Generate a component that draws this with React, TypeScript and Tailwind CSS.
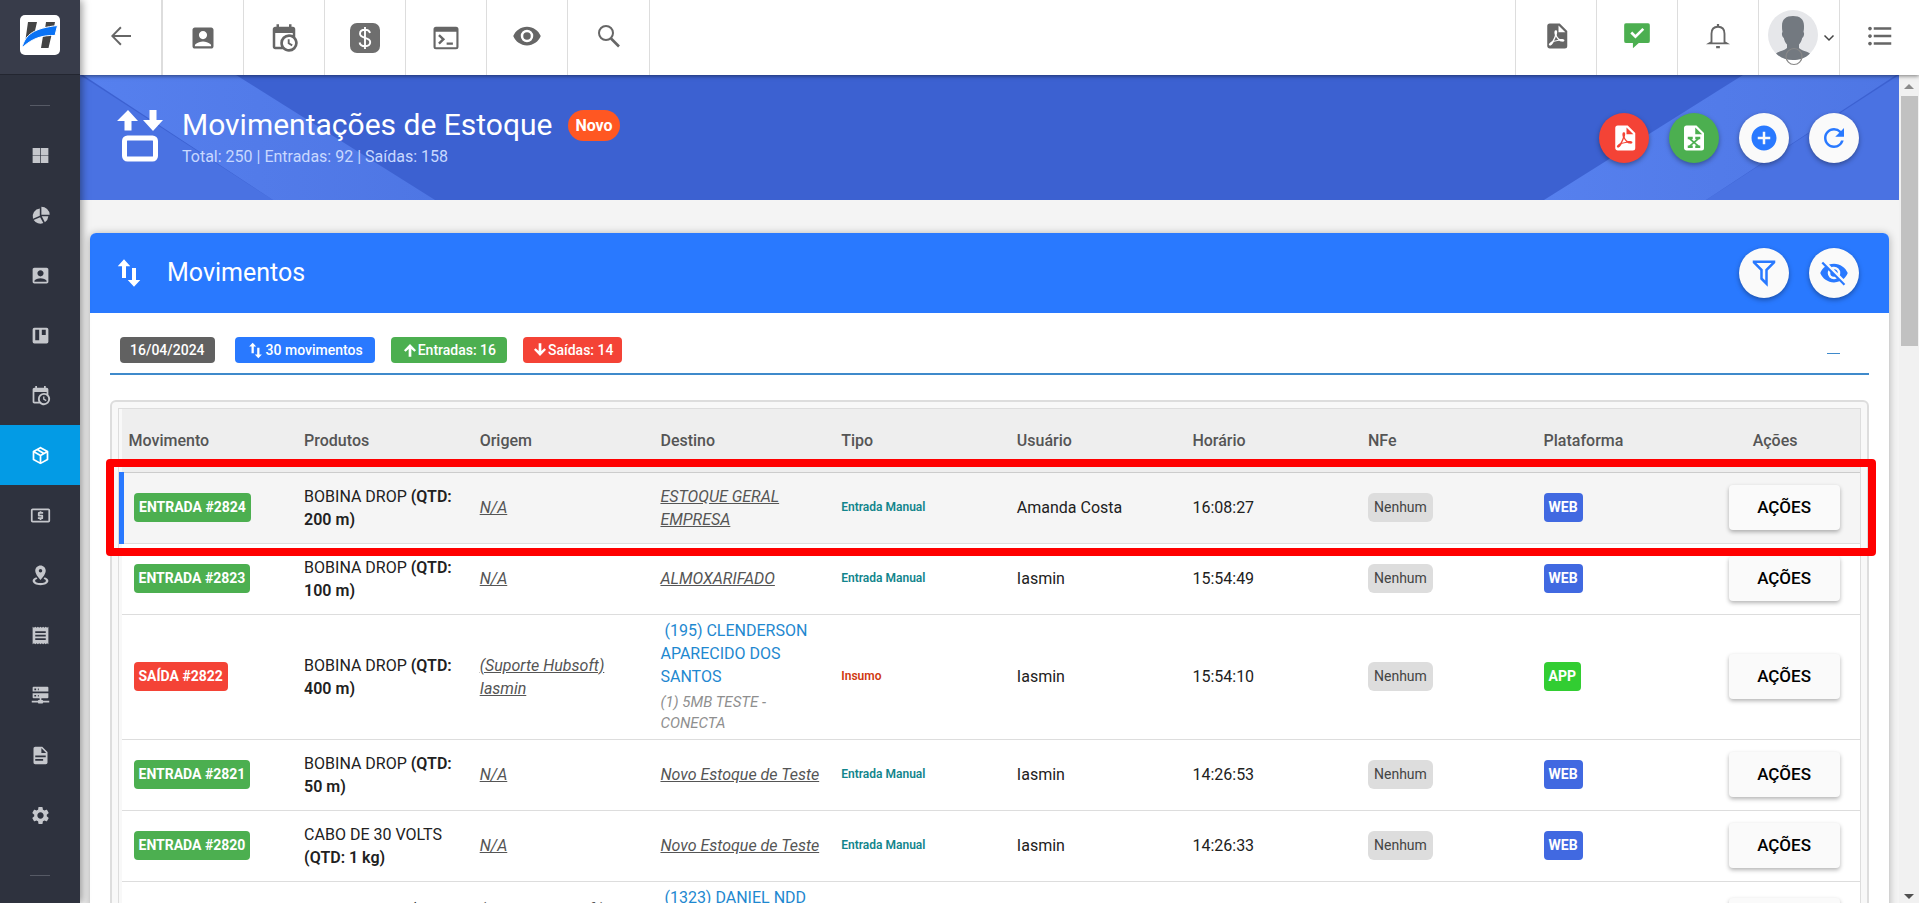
import React from 'react';
import {
    MdAccountBox,
    MdAddCircle,
    MdFormatListBulleted,
    MdRefresh,
    MdSettings,
} from 'react-icons/md';

interface IconProps {
    className?: string;
}

interface Movimento {
    id: number;
    tipo: 'ENTRADA' | 'SAÍDA';
    produto: string;
    qtd: string;
    origem: string;
    destino: string;
    servico?: string;
    motivo: string;
    usuario: string;
    horario: string;
    plataforma: 'WEB' | 'APP';
}

// Cria um ícone 24x24 a partir de um único path
function makeIcon(d: string) {
    return function Icon({ className }: IconProps) {
        return (
            <svg viewBox="0 0 24 24" fill="currentColor" className={className} aria-hidden="true">
                <path d={d} fillRule="evenodd" />
            </svg>
        );
    };
}

const IconWindows = makeIcon('M3,3.5H11.6V11.6H3V3.5M12.4,3.5H21V11.6H12.4V3.5M3,12.4H11.6V20.5H3V12.4M12.4,12.4H21V20.5H12.4V12.4Z');
const IconCalendarClock = makeIcon('M15,13H16.5V15.82L18.94,17.23L18.19,18.53L15,16.69V13M19,8H5V19H9.67C9.24,18.09 9,17.07 9,16A7,7 0 0,1 16,9C17.07,9 18.09,9.24 19,9.67V8M5,21C3.89,21 3,20.1 3,19V5C3,3.89 3.89,3 5,3H6V1H8V3H16V1H18V3H19A2,2 0 0,1 21,5V11.1C22.24,12.36 23,14.09 23,16A7,7 0 0,1 16,23C14.09,23 12.36,22.24 11.1,21H5M16,11.15A4.85,4.85 0 0,0 11.15,16C11.15,18.68 13.32,20.85 16,20.85A4.85,4.85 0 0,0 20.85,16C20.85,13.32 18.68,11.15 16,11.15Z');
const IconEye = makeIcon('M12,9A3,3 0 0,0 9,12A3,3 0 0,0 12,15A3,3 0 0,0 15,12A3,3 0 0,0 12,9M12,17A5,5 0 0,1 7,12A5,5 0 0,1 12,7A5,5 0 0,1 17,12A5,5 0 0,1 12,17M12,4.5C7,4.5 2.73,7.61 1,12C2.73,16.39 7,19.5 12,19.5C17,19.5 21.27,16.39 23,12C21.27,7.61 17,4.5 12,4.5Z');
const IconEyeOff = makeIcon('M11.83,9L15,12.16C15,12.11 15,12.05 15,12A3,3 0 0,0 12,9C11.94,9 11.89,9 11.83,9M7.53,9.8L9.08,11.35C9.03,11.56 9,11.77 9,12A3,3 0 0,0 12,15C12.22,15 12.44,14.97 12.65,14.92L14.2,16.47C13.53,16.8 12.79,17 12,17A5,5 0 0,1 7,12C7,11.21 7.2,10.47 7.53,9.8M2,4.27L4.28,6.55L4.73,7C3.08,8.3 1.78,10 1,12C2.73,16.39 7,19.5 12,19.5C13.55,19.5 15.03,19.2 16.38,18.66L16.81,19.08L19.73,22L21,20.73L3.27,3M12,7A5,5 0 0,1 17,12C17,12.64 16.87,13.26 16.64,13.82L19.57,16.75C21.07,15.5 22.27,13.86 23,12C21.27,7.61 17,4.5 12,4.5C10.6,4.5 9.26,4.75 8,5.2L10.17,7.35C10.74,7.13 11.35,7 12,7Z');
const IconPackage = makeIcon('M21,16.5C21,16.88 20.79,17.21 20.47,17.38L12.57,21.82C12.41,21.94 12.21,22 12,22C11.79,22 11.59,21.94 11.43,21.82L3.53,17.38C3.21,17.21 3,16.88 3,16.5V7.5C3,7.12 3.21,6.79 3.53,6.62L11.43,2.18C11.59,2.06 11.79,2 12,2C12.21,2 12.41,2.06 12.57,2.18L20.47,6.62C20.79,6.79 21,7.12 21,7.5V16.5M12,4.15L10.11,5.22L16,8.61L17.96,7.5L12,4.15M6.04,7.5L12,10.85L13.96,9.75L8.08,6.35L6.04,7.5M5,15.91L11,19.29V12.58L5,9.21V15.91M19,15.91V9.21L13,12.58V19.29L19,15.91Z');
const IconFilePdf = makeIcon('M14,9H19.5L14,3.5V9M7,2H15L21,8V20A2,2 0 0,1 19,22H7C5.89,22 5,21.1 5,20V4A2,2 0 0,1 7,2M11.93,12.44C12.34,13.34 12.86,14.08 13.46,14.59L13.87,14.91C13,15.07 11.8,15.35 10.53,15.84L10.42,15.88L10.92,14.84C11.37,13.97 11.7,13.18 11.93,12.44M18.41,16.25C18.59,16.07 18.68,15.84 18.69,15.59C18.72,15.39 18.67,15.2 18.57,15.04C18.28,14.57 17.53,14.35 16.29,14.35L15,14.42L14.13,13.84C13.5,13.32 12.93,12.41 12.53,11.28L12.57,11.14C12.9,9.81 13.21,8.2 12.55,7.54C12.39,7.38 12.17,7.3 11.94,7.3H11.7C11.33,7.3 11,7.69 10.91,8.07C10.54,9.4 10.76,10.13 11.13,11.34C10.88,12.23 10.56,13.25 10.05,14.28L9.09,16.08L8.2,16.57C7,17.32 6.43,18.16 6.32,18.69C6.28,18.88 6.3,19.05 6.37,19.23L6.4,19.28L6.88,19.59L7.32,19.7C8.13,19.7 9.05,18.75 10.29,16.63L10.47,16.56C11.5,16.23 12.78,16 14.5,15.81C15.53,16.32 16.74,16.55 17.5,16.55C17.94,16.55 18.24,16.44 18.41,16.25Z');
const IconFileExcel = makeIcon('M13,9H18.5L13,3.5V9M6,2H14L20,8V20A2,2 0 0,1 18,22H6C4.89,22 4,21.1 4,20V4C4,2.89 4.89,2 6,2M17,11H13V13H14L12,14.67L10,13H11V11H7V13H8L11,15.5L8,18H7V20H11V18H10L12,16.33L14,18H13V20H17V18H16L13,15.5L16,13H17V11Z');
const IconFilter = makeIcon('M3,2H21V4H20.92L15,9.92V22.91L9,16.91V9.91L3.09,4H3V2M11,16.08L13,18.08V9H13.09L18.09,4H5.92L10.92,9H11V16.08Z');
const IconArrowLeft = makeIcon('M11.2,2.6L12.6,4L5.6,11H22V13H5.6L12.6,20L11.2,21.4L2,12L11.2,2.6Z');
const IconConsole = makeIcon('M4,3H20A2,2 0 0,1 22,5V19A2,2 0 0,1 20,21H4A2,2 0 0,1 2,19V5A2,2 0 0,1 4,3M3.7,7V19.3H20.3V7H3.7M7,9L11.3,13L7,17.2L5.7,15.8L8.5,13L5.7,10.4L7,9M12.5,15.5H17.5V17.3H12.5V15.5Z');
const IconTrello = makeIcon('M5,3H19A2,2 0 0,1 21,5V19A2,2 0 0,1 19,21H5A2,2 0 0,1 3,19V5A2,2 0 0,1 5,3M6,5.5V17.5H10.5V5.5H6M13.5,5.5V11.5H18V5.5H13.5Z');
const IconPie = makeIcon('M13,2A9.5,9.5 0 0,1 22.5,11H13V2M11.2,4V12.2L3.4,15.6A9,9 0 0,1 11.2,4M4.2,17.2L11.6,14L15.2,20.6A9,9 0 0,1 4.2,17.2M13.4,12.8H21A9,9 0 0,1 17,19.6L13.4,12.8Z');
const IconCash = makeIcon('M3,4H21A2,2 0 0,1 23,6V18A2,2 0 0,1 21,20H3A2,2 0 0,1 1,18V6A2,2 0 0,1 3,4M3,6V18H21V6H3M11,7H13V8H15V10H11V11H14A1,1 0 0,1 15,12V15A1,1 0 0,1 14,16H13V17H11V16H9V14H13V13H10A1,1 0 0,1 9,12V9A1,1 0 0,1 10,8H11V7Z');
const IconMapMarker = makeIcon('M12,0.5C15.3,0.5 18,3.2 18,6.5C18,11 12,17 12,17C12,17 6,11 6,6.5C6,3.2 8.7,0.5 12,0.5M12,4.5A2,2 0 0,0 10,6.5A2,2 0 0,0 12,8.5A2,2 0 0,0 14,6.5A2,2 0 0,0 12,4.5M7.2,14L8.5,15.8C7,16.3 5.8,17.2 5.8,18C5.8,19.5 8.5,20.7 12,20.7C15.5,20.7 18.2,19.5 18.2,18C18.2,17.2 17,16.3 15.5,15.8L16.8,14C19.3,14.8 21,16.4 21,18C21,21 17,23 12,23C7,23 3,21 3,18C3,16.4 4.7,14.8 7.2,14Z');
const IconReceipt = makeIcon('M3,22V2L4.5,3.2L6,2L7.5,3.2L9,2L10.5,3.2L12,2L13.5,3.2L15,2L16.5,3.2L18,2L19.5,3.2L21,2V22L19.5,20.8L18,22L16.5,20.8L15,22L13.5,20.8L12,22L10.5,20.8L9,22L7.5,20.8L6,22L4.5,20.8L3,22M18,7H6V9H18V7M18,11H6V13H18V11M18,15H6V17H18V15Z');
const IconServer = makeIcon('M4,2H20A1,1 0 0,1 21,3V7.5H3V3A1,1 0 0,1 4,2M3,9.5H21V14A1,1 0 0,1 20,15H13V17H14A1,1 0 0,1 15,18H22V20H15A1,1 0 0,1 14,21H10A1,1 0 0,1 9,20H2V18H9A1,1 0 0,1 10,17H11V15H4A1,1 0 0,1 3,14V9.5M5,4V6H7V4H5M9,4V6H10V4H9M5,11.3V13.2H7V11.3H5M9,11.3V13.2H10V11.3H9Z');
const IconFile = makeIcon('M13,9H18.5L13,3.5V9M6,2H14L20,8V20A2,2 0 0,1 18,22H6C4.89,22 4,21.1 4,20V4C4,2.89 4.89,2 6,2M15,18V16H6V18H15M18,14V12H6V14H18Z');
const IconCommentCheck = makeIcon('M3,1H21A1.8,1.8 0 0,1 23,3V16A1.8,1.8 0 0,1 21,18H13.5L8.5,22.5V18H3A1.8,1.8 0 0,1 1,16V3A1.8,1.8 0 0,1 3,1M10.7,14.2L18.2,6.7L16.6,5.1L10.7,11L7.9,8.2L6.3,9.8L10.7,14.2Z');
const IconSwapVertical = makeIcon('M8,1L13,6.5H9.6V16H6.4V6.5H3L8,1M16,23L11,17.5H14.4V8H17.6V17.5H21L16,23Z');
const IconArrowUp = makeIcon('M12,3L21,12.5L18.6,14.8L14,10.4V22H10V10.4L5.4,14.8L3,12.5L12,3Z');
const IconArrowDown = makeIcon('M12,21L21,11.5L18.6,9.2L14,13.6V2H10V13.6L5.4,9.2L3,11.5L12,21Z');

function IconSearch({ className }: IconProps) {
    return (
        <svg viewBox="0 0 24 24" fill="none" stroke="currentColor" strokeWidth="2" className={className}>
            <circle cx="9" cy="9" r="7" />
            <path d="M14 14.500 22 22.500" strokeWidth="2.600" />
        </svg>
    );
}

function IconBell({ className }: IconProps) {
    return (
        <svg viewBox="0 0 24 28" fill="none" stroke="currentColor" strokeWidth="2" className={className}>
            <path d="M5 20.500v-9c0-4.500 2.600-7.500 7-7.500s7 3 7 7.500v9l2.500 1.500h-19z" />
            <path d="M12 1v3M10 26h4" strokeWidth="2.400" />
        </svg>
    );
}

function IconDollar({ className }: IconProps) {
    return (
        <svg viewBox="0 0 30 30" className={className}>
            <rect width="30" height="30" rx="7" fill="#6e6e6e" />
            <path
                d="M20 10c-.5-2-2.300-3.200-5-3.200-3 0-5 1.500-5 3.900 0 5.400 10.200 2.800 10.200 8.300 0 2.600-2.200 4.200-5.200 4.200s-5-1.400-5.400-3.700M15 4v22"
                fill="none"
                stroke="#fff"
                strokeWidth="1.900"
            />
        </svg>
    );
}

function IconStock({ className }: IconProps) {
    return (
        <svg viewBox="0 0 46 52" fill="#fff" className={className}>
            <path d="M11 0 21 11h-6.500v9.500h-7V11H0zM36 21 26 10h6.500V0h7v10H46z" />
            <rect x="7.500" y="28" width="31" height="21" rx="3" fill="none" stroke="#fff" strokeWidth="5" />
        </svg>
    );
}

function Logo() {
    return (
        <svg viewBox="0 0 40 40" className="h-10 w-10" role="img" aria-label="Hubsoft">
            <rect width="40" height="40" rx="5" fill="#fff" />
            <path d="M8 7h9l-3 13-9 8zM26 7h9l-1 5-9 2zM23 21l9-3-3.500 15H21z" fill="#444" />
            <path d="M2 33C5 19 15 13 37.500 10.500L35 20.500C23 20 12 23 2 33z" fill="#0a73f5" stroke="#fff" strokeWidth="1" />
        </svg>
    );
}

function Avatar() {
    return (
        <svg viewBox="0 0 50 56" className="h-14 w-[50px]" role="img" aria-label="Usuário">
            <circle cx="25" cy="25" r="25" fill="#e6e7ea" />
            <path
                d="M14 16c0-7 4-10 11-10s11 3 11 10c0 2 0 4-.5 6 1.200 1 .5 5-1.300 6-.6 3-1.700 5-3.200 6.500v3.500c3 3 8 3 11 5.500C37 48.500 31 50 25 50S13 48.500 8 43.500c3-2.500 8-2.500 11-5.500v-3.500c-1.500-1.500-2.600-3.500-3.200-6.500-1.800-1-2.500-5-1.300-6-.5-2-.5-4-.5-6z"
                fill="#737980"
            />
            <circle cx="26" cy="46.500" r="8" fill="none" stroke="#888" strokeWidth="1.200" />
        </svg>
    );
}

const menu = [
    { label: 'Painel', icon: IconWindows },
    { label: 'Relatórios', icon: IconPie },
    { label: 'Clientes', icon: MdAccountBox },
    { label: 'Quadros', icon: IconTrello },
    { label: 'Agenda', icon: IconCalendarClock },
    { label: 'Estoque', icon: IconPackage, active: true },
    { label: 'Financeiro', icon: IconCash },
    { label: 'Mapeamento', icon: IconMapMarker },
    { label: 'Notas', icon: IconReceipt },
    { label: 'Rede', icon: IconServer },
    { label: 'Documentos', icon: IconFile },
    { label: 'Configurações', icon: MdSettings },
];

const atalhos = [
    { label: 'Voltar', icon: IconArrowLeft, cell: 'w-[83px] border-r-2 pb-1', size: 'h-6 w-6' },
    { label: 'Clientes', icon: MdAccountBox, cell: 'w-[81px] border-r', size: 'h-7 w-7' },
    { label: 'Agenda', icon: IconCalendarClock, cell: 'w-[81px] border-r', size: 'h-[30px] w-[30px]' },
    { label: 'Financeiro', icon: IconDollar, cell: 'w-[81px] border-r', size: 'h-[30px] w-[30px]' },
    { label: 'Console', icon: IconConsole, cell: 'w-[81px] border-r', size: 'h-[30px] w-[30px]' },
    { label: 'Visualizar', icon: IconEye, cell: 'w-[81px] border-r pb-1', size: 'h-[30px] w-[30px]' },
    { label: 'Pesquisar', icon: IconSearch, cell: 'w-[82px] border-r pb-1', size: 'h-6 w-6' },
];

const movimentos: Movimento[] = [
    { id: 2824, tipo: 'ENTRADA', produto: 'BOBINA DROP', qtd: '200 m', origem: 'N/A', destino: 'ESTOQUE GERAL EMPRESA', motivo: 'Entrada Manual', usuario: 'Amanda Costa', horario: '16:08:27', plataforma: 'WEB' },
    { id: 2823, tipo: 'ENTRADA', produto: 'BOBINA DROP', qtd: '100 m', origem: 'N/A', destino: 'ALMOXARIFADO', motivo: 'Entrada Manual', usuario: 'Iasmin', horario: '15:54:49', plataforma: 'WEB' },
    { id: 2822, tipo: 'SAÍDA', produto: 'BOBINA DROP', qtd: '400 m', origem: '(Suporte Hubsoft) Iasmin', destino: '(195) CLENDERSON APARECIDO DOS SANTOS', servico: '(1) 5MB TESTE - CONECTA', motivo: 'Insumo', usuario: 'Iasmin', horario: '15:54:10', plataforma: 'APP' },
    { id: 2821, tipo: 'ENTRADA', produto: 'BOBINA DROP', qtd: '50 m', origem: 'N/A', destino: 'Novo Estoque de Teste', motivo: 'Entrada Manual', usuario: 'Iasmin', horario: '14:26:53', plataforma: 'WEB' },
    { id: 2820, tipo: 'ENTRADA', produto: 'CABO DE 30 VOLTS', qtd: '1 kg', origem: 'N/A', destino: 'Novo Estoque de Teste', motivo: 'Entrada Manual', usuario: 'Iasmin', horario: '14:26:33', plataforma: 'WEB' },
    { id: 2819, tipo: 'SAÍDA', produto: 'BOBINA DROP', qtd: '10 m', origem: '(Suporte Hubsoft) Iasmin', destino: '(1323) DANIEL NDD', servico: '(1) 5MB TESTE - CONECTA', motivo: 'Insumo', usuario: 'Iasmin', horario: '14:20:10', plataforma: 'APP' },
];

const colunas = [
    { nome: 'Movimento', largura: 'w-[10.1%]' },
    { nome: 'Produtos', largura: 'w-[10.1%]' },
    { nome: 'Origem', largura: 'w-[10.4%]' },
    { nome: 'Destino', largura: 'w-[10.4%]' },
    { nome: 'Tipo', largura: 'w-[10.1%]' },
    { nome: 'Usuário', largura: 'w-[10.1%]' },
    { nome: 'Horário', largura: 'w-[10.1%]' },
    { nome: 'NFe', largura: 'w-[10.1%]' },
    { nome: 'Plataforma', largura: 'w-[10.1%]' },
];

function Sidebar() {
    return (
        <aside className="z-20 flex w-20 shrink-0 flex-col items-center bg-[#2e323e] shadow-[2px_0_8px_rgba(0,0,0,0.4)]">
            <div className="flex h-[75px] w-full shrink-0 items-center justify-center border-b border-[#232630] bg-[#383c4a] pb-1">
                <Logo />
            </div>
            <div className="mt-[30px] h-px w-5 shrink-0 bg-[#565a65]" />
            <nav className="mt-[19px] flex w-full flex-col">
                {menu.map((item) => (
                    <a
                        key={item.label}
                        href="#"
                        aria-label={item.label}
                        className={`flex h-[60px] items-center justify-center ${item.active ? 'bg-[#039be5] text-white' : 'text-[#c5c7cc]'}`}
                    >
                        <item.icon className="h-[21px] w-[21px]" />
                    </a>
                ))}
            </nav>
            <div className="mt-[30px] h-px w-5 shrink-0 bg-[#565a65]" />
        </aside>
    );
}

function Topbar() {
    return (
        <header className="z-10 flex h-[75px] shrink-0 justify-between bg-white text-[#666] shadow-[0_1px_4px_rgba(0,0,0,0.5)]">
            <div className="flex">
                {atalhos.map((item) => (
                    <button
                        key={item.label}
                        type="button"
                        aria-label={item.label}
                        className={`flex items-center justify-center border-[#ddd] ${item.cell}`}
                    >
                        <item.icon className={item.size} />
                    </button>
                ))}
            </div>
            <div className="flex">
                <button type="button" aria-label="Exportações" className="flex w-[81px] items-center justify-center border-l border-[#ddd] pb-1">
                    <IconFilePdf className="h-[30px] w-[30px]" />
                </button>
                <button type="button" aria-label="Tarefas" className="flex w-[81px] items-center justify-center border-l border-[#ddd] pb-1">
                    <IconCommentCheck className="h-7 w-7 text-[#4caf50]" />
                </button>
                <button type="button" aria-label="Notificações" className="flex w-[81px] items-center justify-center border-l border-[#ddd] pb-1">
                    <IconBell className="h-[26px] w-6" />
                </button>
                <button type="button" aria-label="Conta" className="flex w-[81px] items-center justify-center gap-[5px] border-l border-[#ddd] pl-1">
                    <Avatar />
                    <svg viewBox="0 0 12 8" className="h-2 w-3 shrink-0" fill="none" stroke="#444" strokeWidth="1.500">
                        <path d="M1.500 1.500 6 6l4.500-4.500" />
                    </svg>
                </button>
                <button type="button" aria-label="Menu" className="flex w-20 items-center justify-center border-l border-[#ddd] pb-1">
                    <MdFormatListBulleted className="h-[30px] w-[30px]" />
                </button>
            </div>
        </header>
    );
}

function RoundButton({ label, className, children }: { label: string; className: string; children: React.ReactNode }) {
    return (
        <button
            type="button"
            aria-label={label}
            className={`flex h-[50px] w-[50px] items-center justify-center rounded-full shadow-[0_2px_5px_rgba(0,0,0,0.35)] ${className}`}
        >
            {children}
        </button>
    );
}

function Banner() {
    return (
        <section className="relative flex h-[125px] shrink-0 items-center justify-between bg-[#3c61d1] pr-10 pl-[37px]">
            {/* Faixas diagonais do fundo */}
            <svg className="absolute inset-y-0 left-0 h-full w-[360px]" viewBox="0 0 360 125" preserveAspectRatio="none" aria-hidden="true">
                <defs>
                    <linearGradient id="faixa" x1="0" y1="0" x2="1" y2="0">
                        <stop offset="0" stopColor="#5680ee" />
                        <stop offset="1" stopColor="#4e76e4" />
                    </linearGradient>
                </defs>
                <path d="M0 0 193 125H0z" fill="#4a72e2" />
                <path d="M3 0H156L355 125H193z" fill="url(#faixa)" />
            </svg>
            <svg className="absolute inset-y-0 right-0 h-full w-[360px]" viewBox="0 0 360 125" preserveAspectRatio="none" aria-hidden="true">
                <path d="M360 0 167 125H360z" fill="#4a72e2" />
                <path d="M357 0H204L5 125H167z" fill="url(#faixa)" />
            </svg>
            <div className="relative flex items-center gap-[19px]">
                <IconStock className="-mt-1 h-[52px] w-[46px]" />
                <div>
                    <div className="flex items-center gap-4">
                        <h1 className="text-[30px] leading-[38px] text-white">Movimentações de Estoque</h1>
                        <span className="rounded-full bg-[#ff5722] px-[7px] text-[16px] leading-[31px] font-bold text-white">Novo</span>
                    </div>
                    <p className="text-[16px] leading-[25px] text-[#c8d8ff]">Total: 250 | Entradas: 92 | Saídas: 158</p>
                </div>
            </div>
            <div className="relative flex gap-5">
                <RoundButton label="Exportar PDF" className="bg-[#f44336] text-white">
                    <IconFilePdf className="h-[30px] w-[30px]" />
                </RoundButton>
                <RoundButton label="Exportar Excel" className="bg-[#4caf50] text-white">
                    <IconFileExcel className="h-[30px] w-[30px]" />
                </RoundButton>
                <RoundButton label="Adicionar" className="bg-[#fafafa] text-[#2979ff]">
                    <MdAddCircle className="h-[30px] w-[30px]" />
                </RoundButton>
                <RoundButton label="Atualizar" className="bg-[#fafafa] text-[#2979ff]">
                    <MdRefresh className="h-[30px] w-[30px]" />
                </RoundButton>
            </div>
        </section>
    );
}

function Resumo() {
    return (
        <div className="mx-5 flex items-start justify-between border-b-2 border-[#3f8acb] pt-6 pr-[29px] pb-[10px] pl-[10px]">
            <div className="flex h-[26px] text-[14px] leading-[26px] font-medium text-white">
                <span className="mr-5 rounded-[4px] bg-[#616161] px-[10px]">16/04/2024</span>
                <span className="mr-4 flex items-center gap-[2px] rounded-[4px] bg-[#2979ff] px-3">
                    <IconSwapVertical className="h-[17px] w-[17px]" />
                    30 movimentos
                </span>
                <span className="mr-4 flex items-center rounded-[4px] bg-[#4caf50] px-[11px]">
                    <IconArrowUp className="h-4 w-4" />
                    Entradas: 16
                </span>
                <span className="flex items-center rounded-[4px] bg-[#f44336] px-[9px]">
                    <IconArrowDown className="h-4 w-4" />
                    Saídas: 14
                </span>
            </div>
            <button type="button" aria-label="Recolher" className="flex h-[26px] w-[13px] items-center pt-[6px]">
                <span className="h-px w-full bg-[#3f8acb]" />
            </button>
        </div>
    );
}

function Linha({ mov, destaque }: { mov: Movimento; destaque: boolean }) {
    const saida = mov.tipo === 'SAÍDA';

    return (
        <tr className={`border-b border-[#ddd] ${destaque ? 'bg-[#f5f5f5]' : 'bg-white'}`}>
            <td className={`h-[71px] ${destaque ? 'border-l-[5px] border-[#2979ff] pl-[10px]' : 'pl-3'}`}>
                <span className={`inline-block rounded-[4px] px-[5px] text-[14px] leading-[29px] font-bold text-white ${saida ? 'bg-[#f44336]' : 'bg-[#4caf50]'}`}>
                    {mov.tipo} #{mov.id}
                </span>
            </td>
            <td className="px-[7px]">
                {mov.produto} <strong className="font-semibold">(QTD: {mov.qtd})</strong>
            </td>
            <td className="px-[7px] text-[#555] italic underline">{mov.origem}</td>
            <td className={`px-[7px] ${mov.servico ? 'pt-1 pb-[5px]' : ''}`}>
                {mov.servico ? (
                    <>
                        <a href="#" className="block pb-1 text-[#1e88d0]">&nbsp;{mov.destino}</a>
                        <span className="block text-[15px] leading-[21px] text-[#8f8f8f] italic">{mov.servico}</span>
                    </>
                ) : (
                    <span className="text-[#555] italic underline">{mov.destino}</span>
                )}
            </td>
            <td className={`px-[7px] text-[12px] font-semibold ${saida ? 'text-[#d0390f]' : 'text-[#12858c]'}`}>{mov.motivo}</td>
            <td className="px-[7px]">{mov.usuario}</td>
            <td className="px-[7px]">{mov.horario}</td>
            <td className="px-[7px]">
                <span className="inline-block rounded-[6px] bg-[#ddd] px-[6px] text-[14px] leading-[29px] text-[#444]">Nenhum</span>
            </td>
            <td className="px-[7px]">
                <span className={`inline-block rounded-[4px] px-[5px] text-[14px] leading-[29px] font-bold text-white ${mov.plataforma === 'APP' ? 'bg-[#32cd32]' : 'bg-[#4169e1]'}`}>
                    {mov.plataforma}
                </span>
            </td>
            <td className="pr-1 text-center">
                <button type="button" className="h-[45px] w-[111px] rounded-[4px] bg-[#fafafa] text-[17px] font-medium text-black shadow-[0_2px_4px_rgba(0,0,0,0.3)]">
                    AÇÕES
                </button>
            </td>
        </tr>
    );
}

export default function App() {
    return (
        <div className="flex h-screen overflow-hidden bg-[#f4f4f4] font-[Roboto,'Liberation_Sans',sans-serif] text-[#212121]">
            <Sidebar />
            <div className="flex min-w-0 flex-1 flex-col">
                <Topbar />
                <div className="flex min-h-0 flex-1">
                    <main className="flex min-w-0 flex-1 flex-col overflow-hidden">
                        <Banner />
                        <section className="mx-[10px] mt-[33px] shrink-0 rounded-t-[6px] bg-white shadow-[0_1px_8px_rgba(0,0,0,0.3)]">
                            <div className="flex h-20 items-center justify-between rounded-t-[6px] bg-[#2979ff] pr-[30px] pl-6">
                                <div className="flex items-center gap-[23px] text-white">
                                    <IconSwapVertical className="h-[30px] w-[30px]" />
                                    <h2 className="text-[25px]">Movimentos</h2>
                                </div>
                                <div className="flex gap-5">
                                    <RoundButton label="Filtrar" className="bg-[#fafafa] text-[#2979ff]">
                                        <IconFilter className="h-[30px] w-[30px]" />
                                    </RoundButton>
                                    <RoundButton label="Ocultar" className="bg-[#fafafa] text-[#2979ff]">
                                        <IconEyeOff className="h-[30px] w-[30px]" />
                                    </RoundButton>
                                </div>
                            </div>
                            <Resumo />
                            <div className="relative mx-5 mt-[25px]">
                                <div className="rounded-t-[6px] border-2 border-[#ddd] bg-[#f8f8f8] p-[6px]">
                                    <div className="border border-[#ddd]">
                                        <table className="w-full table-fixed border-collapse text-left text-[16px] leading-[23px]">
                                            <thead>
                                                <tr className="h-[63px] border-b border-[#ccc] bg-[#eee] text-[#555]">
                                                    {colunas.map((coluna) => (
                                                        <th key={coluna.nome} className={`${coluna.largura} px-[7px] font-medium`}>
                                                            {coluna.nome}
                                                        </th>
                                                    ))}
                                                    <th className="pr-[22px] text-center font-medium">Ações</th>
                                                </tr>
                                            </thead>
                                            <tbody>
                                                {movimentos.map((mov, index) => (
                                                    <Linha key={mov.id} mov={mov} destaque={index === 0} />
                                                ))}
                                            </tbody>
                                        </table>
                                    </div>
                                </div>
                                {/* Moldura do movimento mais recente */}
                                <div className="pointer-events-none absolute top-[59px] -right-[7px] -left-1 h-[97px] rounded-[4px] border-8 border-[#f00]" />
                            </div>
                        </section>
                    </main>
                    {/* Barra de rolagem */}
                    <div className="flex w-5 shrink-0 flex-col items-center justify-between bg-[#f1f1f1] pt-[9px] pb-1">
                        <div className="flex flex-col items-center gap-[7px]">
                            <div className="h-0 w-0 border-x-[5px] border-b-[5px] border-x-transparent border-b-[#8b8b8b]" />
                            <div className="h-[250px] w-[17px] bg-[#c1c1c1]" />
                        </div>
                        <div className="h-0 w-0 border-x-[5px] border-t-[5px] border-x-transparent border-t-[#505050]" />
                    </div>
                </div>
            </div>
        </div>
    );
}
